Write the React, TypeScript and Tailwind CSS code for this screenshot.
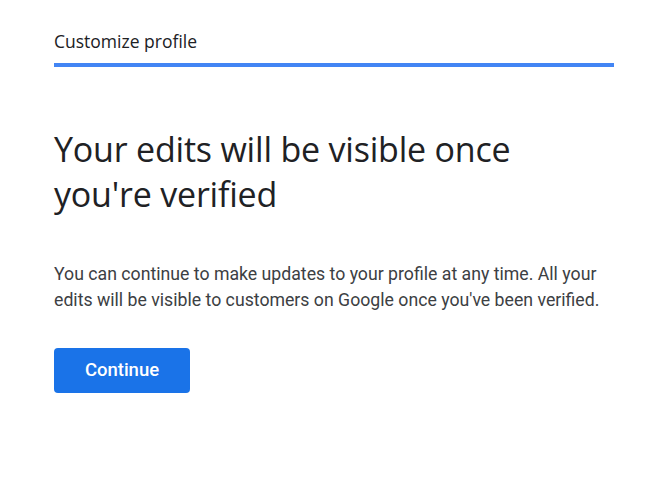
export default function App() {
  return (
    <div className="min-h-[503px] w-full bg-white px-[54px] pt-[29px] font-['Roboto',sans-serif] text-[#202124]">
      {/* Header */}
      <div className="text-[17.5px] leading-[24px] text-[#202124] font-['Open_Sans',sans-serif] font-medium">
        Customize profile
      </div>
      <div className="mt-[10px] h-[4px] w-full bg-[#4285f4]" />

      {/* Body */}
      <h1 className="mt-[60px] font-['Open_Sans',sans-serif] text-[34px] leading-[45px] font-normal tracking-[-0.2px] text-[#202124]">
        Your edits will be visible once
        <br />
        you're verified
      </h1>
      <p className="mt-[44px] text-[17.7px] leading-[26px] text-[#3c4043]">
        You can continue to make updates to your profile at any time. All your edits will be
        visible to customers on Google once you've been verified.
      </p>
      <button className="mt-[35px] h-[45px] w-[136px] rounded-[4px] bg-[#1a73e8] text-[18.5px] font-medium text-white">
        Continue
      </button>
    </div>
  );
}
